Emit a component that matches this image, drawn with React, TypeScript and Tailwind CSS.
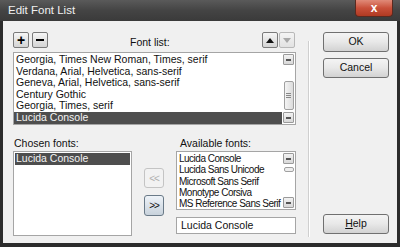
import React from 'react';

const FONT = { fontFamily: '"Liberation Sans", Arial, sans-serif' };

const fontList = [
  'Georgia, Times New Roman, Times, serif',
  'Verdana, Arial, Helvetica, sans-serif',
  'Geneva, Arial, Helvetica, sans-serif',
  'Century Gothic',
  'Georgia, Times, serif',
  'Lucida Console',
];

const availableFonts = [
  'Lucida Console',
  'Lucida Sans Unicode',
  'Microsoft Sans Serif',
  'Monotype Corsiva',
  'MS Reference Sans Serif',
];

// small square button used for +, -, arrows
function ToolButton({ children, disabled }: { children: React.ReactNode; disabled?: boolean }) {
  return (
    <div
      className={`w-[16px] h-[16px] rounded-[2px] border flex items-center justify-center ${
        disabled
          ? 'border-[#b8b8b8] bg-gradient-to-b from-[#f4f4f4] to-[#e2e2e2]'
          : 'border-[#7a7a7a] bg-gradient-to-b from-[#f6f6f6] to-[#d4d4d4]'
      }`}
    >
      {children}
    </div>
  );
}

function DialogButton({ label, className = '' }: { label: React.ReactNode; className?: string }) {
  return (
    <div
      className={`h-[20px] w-[66px] rounded-[3px] border border-[#707070] bg-gradient-to-b from-[#f4f4f4] via-[#e8e8e8] to-[#d2d2d2] flex items-center justify-center text-[10.5px] text-[#111] ${className}`}
    >
      {label}
    </div>
  );
}

// scrollbar arrow box (rendered as tiny dash like the reference)
function ScrollArrow() {
  return (
    <div className="w-[11px] h-[11px] border border-[#9a9a9a] rounded-[1px] bg-gradient-to-b from-[#f2f2f2] to-[#d8d8d8] flex items-center justify-center">
      <div className="w-[5px] h-[2px] bg-[#555]" />
    </div>
  );
}

export default function App() {
  return (
    <div className="w-[400px] h-[247px] bg-[#2c2c2c] flex flex-col overflow-hidden" style={FONT}>
      {/* Title bar */}
      <div className="h-[21px] relative bg-gradient-to-b from-[#5a5a5a] via-[#444] to-[#3a3a3a] flex items-center pl-[8px]">
        <span className="text-[11.5px] text-[#f0f0f0]">Edit Font List</span>
        <div className="absolute right-[7px] top-0 w-[38px] h-[17px] rounded-b-[4px] border border-t-0 border-[#5a2a20] bg-gradient-to-b from-[#e08a78] via-[#c9503a] to-[#b03a22] flex items-center justify-center">
          <span className="text-[12px] font-bold text-white leading-none -mt-[1px]">x</span>
        </div>
      </div>

      {/* Body */}
      <div className="flex-1 ml-[3px] mr-[3px] mb-[4px] bg-[#f0f0f0] flex pl-[10px] pt-[11px]">
        {/* Left column */}
        <div className="w-[284px] flex flex-col">
          <div className="h-[16px] flex items-center">
            <ToolButton>
              <span className="text-[14px] font-bold leading-none text-black -mt-[1px]">+</span>
            </ToolButton>
            <div className="ml-[3px]">
              <ToolButton>
                <div className="w-[8px] h-[2px] bg-black" />
              </ToolButton>
            </div>
            <span className="ml-[82px] mt-[5px] text-[10.5px] text-[#111]">Font list:</span>
            <div className="ml-auto mr-[2px] flex gap-[1px]">
              <ToolButton>
                <svg width="8" height="5" viewBox="0 0 8 5"><path d="M0 5 L4 0 L8 5 Z" fill="#111" /></svg>
              </ToolButton>
              <ToolButton disabled>
                <svg width="8" height="5" viewBox="0 0 8 5"><path d="M0 0 L4 5 L8 0 Z" fill="#a8a8a8" /></svg>
              </ToolButton>
            </div>
          </div>

          {/* Font list box */}
          <div className="mt-[4px] h-[73px] mr-[1px] border border-[#a5a5a5] bg-white flex">
            <div className="flex-1 flex flex-col pt-[1px]">
              {fontList.map((f, i) => (
                <div
                  key={f}
                  className={`h-[11.6px] leading-[11.6px] text-[10.5px] pl-[2px] whitespace-nowrap ${
                    i === fontList.length - 1 ? 'bg-[#4e4e4e] text-[#f4f4f4]' : 'text-[#111]'
                  }`}
                >
                  {f}
                </div>
              ))}
            </div>
            <div className="w-[13px] flex flex-col items-center pt-[1px] pb-[1px]">
              <ScrollArrow />
              <div className="flex-1 w-full flex flex-col items-center pt-[16px] pb-[2px]">
                <div className="w-[10px] h-[29px] border border-[#a0a0a0] rounded-[2px] bg-gradient-to-r from-[#f4f4f4] to-[#dcdcdc] flex flex-col items-center justify-center gap-[1px]">
                  <div className="w-[5px] h-px bg-[#888]" />
                  <div className="w-[5px] h-px bg-[#888]" />
                  <div className="w-[5px] h-px bg-[#888]" />
                </div>
              </div>
              <ScrollArrow />
            </div>
          </div>

          {/* Bottom lists */}
          <div className="mt-[12px] flex">
            <div className="w-[119px] shrink-0 flex flex-col">
              <span className="text-[10.5px] text-[#111] h-[13px] leading-[13px] pl-[1px]">Chosen fonts:</span>
              <div className="mt-[1px] h-[85px] border border-[#a5a5a5] bg-white pt-[1px] px-[1px]">
                <div className="h-[11.6px] leading-[11.6px] text-[10.5px] pl-[1px] bg-[#4e4e4e] text-[#f4f4f4]">
                  Lucida Console
                </div>
              </div>
            </div>

            <div className="w-[44px] shrink-0 flex flex-col items-center pt-[31px]">
              <div className="w-[20px] h-[20px] rounded-[3px] border border-[#c4c4c4] bg-[#f2f2f2] flex items-center justify-center text-[10px] text-[#b0b0b0] tracking-[-1px]">
                &lt;&lt;
              </div>
              <div className="mt-[7px] w-[20px] h-[21px] rounded-[3px] border border-[#6a7a88] bg-gradient-to-b from-[#eef3f8] to-[#c8d2dc] flex items-center justify-center text-[10px] text-[#111] tracking-[-1px]">
                &gt;&gt;
              </div>
            </div>

            <div className="w-[120px] shrink-0 flex flex-col">
              <span className="text-[10.5px] text-[#111] h-[13px] leading-[13px] pl-[4px]">Available fonts:</span>
              <div className="mt-[1px] h-[59px] border border-[#a5a5a5] bg-white flex">
                <div className="flex-1 min-w-0 flex flex-col pt-[1px] overflow-hidden">
                  {availableFonts.map((f) => (
                    <div key={f} className="h-[11.3px] leading-[11.3px] text-[10px] tracking-[-0.5px] pl-[2px] whitespace-nowrap text-[#111]">
                      {f}
                    </div>
                  ))}
                </div>
                <div className="w-[13px] shrink-0 flex flex-col items-center pt-[1px] pb-[1px] bg-white">
                  <ScrollArrow />
                  <div className="flex-1 w-full flex flex-col items-center pt-[3px]">
                    <div className="w-[10px] h-[5px] border border-[#a0a0a0] rounded-[2px] bg-[#eee]" />
                  </div>
                  <ScrollArrow />
                </div>
              </div>
              <div className="mt-[7px] h-[17px] border border-[#a5a5a5] bg-white text-[10.5px] leading-[15px] pl-[4px] text-[#111]">
                Lucida Console
              </div>
            </div>
          </div>
        </div>

        {/* Separator */}
        <div className="ml-[11px] mt-[9px] mb-[6px] w-px bg-[#cfcfcf] border-r border-white box-content" />

        {/* Right column */}
        <div className="ml-[13px] flex flex-col">
          <DialogButton label="OK" />
          <DialogButton label="Cancel" className="mt-[6px]" />
          <div className="flex-1" />
          <DialogButton
            label={
              <span>
                <span className="underline">H</span>elp
              </span>
            }
            className="mb-[9px]"
          />
        </div>
      </div>
    </div>
  );
}
